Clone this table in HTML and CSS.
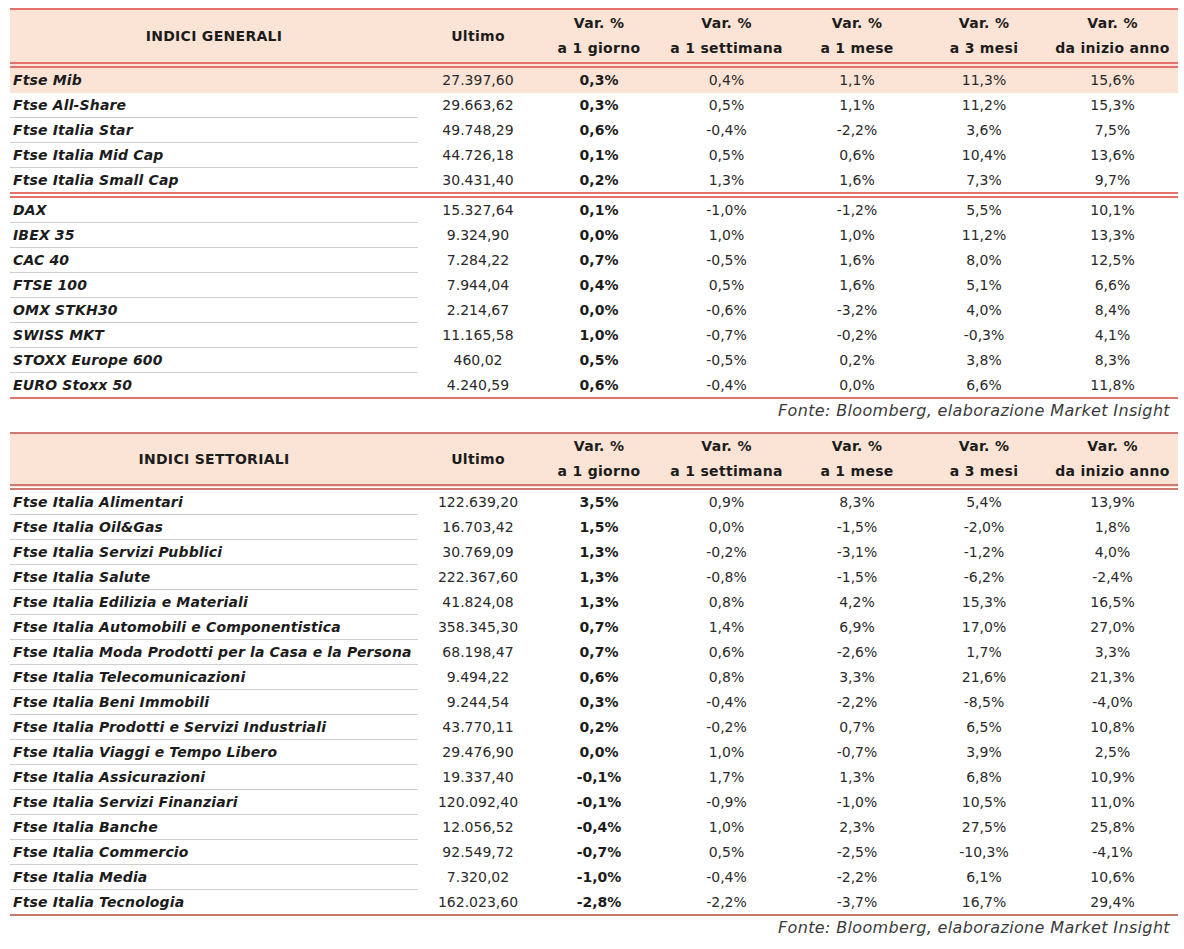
FILE: index.html
```html
<!DOCTYPE html>
<html lang="it">
<head>
<meta charset="utf-8">
<title>Indici</title>
<link rel="stylesheet" href="styles.css">
</head>
<body>
<div class="page">
  <table class="idx idx-gen">
    <colgroup>
      <col class="c-name"><col class="c1"><col class="c2"><col class="c3"><col class="c4"><col class="c5"><col class="c6">
    </colgroup>
    <thead>
      <tr>
        <th>INDICI GENERALI</th>
        <th>Ultimo</th>
        <th>Var. %<br>a 1 giorno</th>
        <th>Var. %<br>a 1 settimana</th>
        <th>Var. %<br>a 1 mese</th>
        <th>Var. %<br>a 3 mesi</th>
        <th>Var. %<br>da inizio anno</th>
      </tr>
    </thead>
    <tbody>
      <tr class="hl"><td class="name">Ftse Mib</td><td>27.397,60</td><td class="b">0,3%</td><td>0,4%</td><td>1,1%</td><td>11,3%</td><td>15,6%</td></tr>
      <tr><td class="name">Ftse All-Share</td><td>29.663,62</td><td class="b">0,3%</td><td>0,5%</td><td>1,1%</td><td>11,2%</td><td>15,3%</td></tr>
      <tr><td class="name">Ftse Italia Star</td><td>49.748,29</td><td class="b">0,6%</td><td>-0,4%</td><td>-2,2%</td><td>3,6%</td><td>7,5%</td></tr>
      <tr><td class="name">Ftse Italia Mid Cap</td><td>44.726,18</td><td class="b">0,1%</td><td>0,5%</td><td>0,6%</td><td>10,4%</td><td>13,6%</td></tr>
      <tr><td class="name">Ftse Italia Small Cap</td><td>30.431,40</td><td class="b">0,2%</td><td>1,3%</td><td>1,6%</td><td>7,3%</td><td>9,7%</td></tr>
    </tbody>
    <tbody class="grp">
      <tr><td class="name">DAX</td><td>15.327,64</td><td class="b">0,1%</td><td>-1,0%</td><td>-1,2%</td><td>5,5%</td><td>10,1%</td></tr>
      <tr><td class="name">IBEX 35</td><td>9.324,90</td><td class="b">0,0%</td><td>1,0%</td><td>1,0%</td><td>11,2%</td><td>13,3%</td></tr>
      <tr><td class="name">CAC 40</td><td>7.284,22</td><td class="b">0,7%</td><td>-0,5%</td><td>1,6%</td><td>8,0%</td><td>12,5%</td></tr>
      <tr><td class="name">FTSE 100</td><td>7.944,04</td><td class="b">0,4%</td><td>0,5%</td><td>1,6%</td><td>5,1%</td><td>6,6%</td></tr>
      <tr><td class="name">OMX STKH30</td><td>2.214,67</td><td class="b">0,0%</td><td>-0,6%</td><td>-3,2%</td><td>4,0%</td><td>8,4%</td></tr>
      <tr><td class="name">SWISS MKT</td><td>11.165,58</td><td class="b">1,0%</td><td>-0,7%</td><td>-0,2%</td><td>-0,3%</td><td>4,1%</td></tr>
      <tr><td class="name">STOXX Europe 600</td><td>460,02</td><td class="b">0,5%</td><td>-0,5%</td><td>0,2%</td><td>3,8%</td><td>8,3%</td></tr>
      <tr class="last"><td class="name">EURO Stoxx 50</td><td>4.240,59</td><td class="b">0,6%</td><td>-0,4%</td><td>0,0%</td><td>6,6%</td><td>11,8%</td></tr>
    </tbody>
  </table>
  <p class="fonte">Fonte: Bloomberg, elaborazione Market Insight</p>

  <table class="idx idx-set">
    <colgroup>
      <col class="c-name"><col class="c1"><col class="c2"><col class="c3"><col class="c4"><col class="c5"><col class="c6">
    </colgroup>
    <thead>
      <tr>
        <th>INDICI SETTORIALI</th>
        <th>Ultimo</th>
        <th>Var. %<br>a 1 giorno</th>
        <th>Var. %<br>a 1 settimana</th>
        <th>Var. %<br>a 1 mese</th>
        <th>Var. %<br>a 3 mesi</th>
        <th>Var. %<br>da inizio anno</th>
      </tr>
    </thead>
    <tbody>
      <tr><td class="name">Ftse Italia Alimentari</td><td>122.639,20</td><td class="b">3,5%</td><td>0,9%</td><td>8,3%</td><td>5,4%</td><td>13,9%</td></tr>
      <tr><td class="name">Ftse Italia Oil&amp;Gas</td><td>16.703,42</td><td class="b">1,5%</td><td>0,0%</td><td>-1,5%</td><td>-2,0%</td><td>1,8%</td></tr>
      <tr><td class="name">Ftse Italia Servizi Pubblici</td><td>30.769,09</td><td class="b">1,3%</td><td>-0,2%</td><td>-3,1%</td><td>-1,2%</td><td>4,0%</td></tr>
      <tr><td class="name">Ftse Italia Salute</td><td>222.367,60</td><td class="b">1,3%</td><td>-0,8%</td><td>-1,5%</td><td>-6,2%</td><td>-2,4%</td></tr>
      <tr><td class="name">Ftse Italia Edilizia e Materiali</td><td>41.824,08</td><td class="b">1,3%</td><td>0,8%</td><td>4,2%</td><td>15,3%</td><td>16,5%</td></tr>
      <tr><td class="name">Ftse Italia Automobili e Componentistica</td><td>358.345,30</td><td class="b">0,7%</td><td>1,4%</td><td>6,9%</td><td>17,0%</td><td>27,0%</td></tr>
      <tr><td class="name">Ftse Italia Moda Prodotti per la Casa e la Persona</td><td>68.198,47</td><td class="b">0,7%</td><td>0,6%</td><td>-2,6%</td><td>1,7%</td><td>3,3%</td></tr>
      <tr><td class="name">Ftse Italia Telecomunicazioni</td><td>9.494,22</td><td class="b">0,6%</td><td>0,8%</td><td>3,3%</td><td>21,6%</td><td>21,3%</td></tr>
      <tr><td class="name">Ftse Italia Beni Immobili</td><td>9.244,54</td><td class="b">0,3%</td><td>-0,4%</td><td>-2,2%</td><td>-8,5%</td><td>-4,0%</td></tr>
      <tr><td class="name">Ftse Italia Prodotti e Servizi Industriali</td><td>43.770,11</td><td class="b">0,2%</td><td>-0,2%</td><td>0,7%</td><td>6,5%</td><td>10,8%</td></tr>
      <tr><td class="name">Ftse Italia Viaggi e Tempo Libero</td><td>29.476,90</td><td class="b">0,0%</td><td>1,0%</td><td>-0,7%</td><td>3,9%</td><td>2,5%</td></tr>
      <tr><td class="name">Ftse Italia Assicurazioni</td><td>19.337,40</td><td class="b">-0,1%</td><td>1,7%</td><td>1,3%</td><td>6,8%</td><td>10,9%</td></tr>
      <tr><td class="name">Ftse Italia Servizi Finanziari</td><td>120.092,40</td><td class="b">-0,1%</td><td>-0,9%</td><td>-1,0%</td><td>10,5%</td><td>11,0%</td></tr>
      <tr><td class="name">Ftse Italia Banche</td><td>12.056,52</td><td class="b">-0,4%</td><td>1,0%</td><td>2,3%</td><td>27,5%</td><td>25,8%</td></tr>
      <tr><td class="name">Ftse Italia Commercio</td><td>92.549,72</td><td class="b">-0,7%</td><td>0,5%</td><td>-2,5%</td><td>-10,3%</td><td>-4,1%</td></tr>
      <tr><td class="name">Ftse Italia Media</td><td>7.320,02</td><td class="b">-1,0%</td><td>-0,4%</td><td>-2,2%</td><td>6,1%</td><td>10,6%</td></tr>
      <tr class="last"><td class="name">Ftse Italia Tecnologia</td><td>162.023,60</td><td class="b">-2,8%</td><td>-2,2%</td><td>-3,7%</td><td>16,7%</td><td>29,4%</td></tr>
    </tbody>
  </table>
  <p class="fonte">Fonte: Bloomberg, elaborazione Market Insight</p>
</div>
</body>
</html>
```

FILE: styles.css
```css
html, body {
  margin: 0;
  padding: 0;
  background: #ffffff;
}

body {
  font-family: "DejaVu Sans", "Liberation Sans", sans-serif;
  color: #262626;
}

.page {
  padding: 8px 6px 0 10px;
  width: 1168px;
}

.idx {
  width: 1168px;
  table-layout: fixed;
  border-collapse: collapse;
  border-spacing: 0;
}

.c-name { width: 408px; }
.c1 { width: 120px; }
.c2 { width: 122px; }
.c3 { width: 133px; }
.c4 { width: 128px; }
.c5 { width: 126px; }
.c6 { width: 131px; }

.idx th {
  background: #fbe4d5;
  font-weight: bold;
  font-size: 14px;
  letter-spacing: 0.3px;
  line-height: 25px;
  height: 52px;
  padding: 0;
  text-align: center;
  color: #1c1c1c;
  border-top: 2px solid #e2726a;
  border-bottom: 6px double #e2726a;
}

.idx-set th {
  height: 50px;
}

.idx td {
  height: 24px;
  padding: 0;
  font-size: 14px;
  line-height: 24px;
  text-align: center;
  color: #2a2a2a;
  white-space: nowrap;
}

.idx td.name {
  text-align: left;
  padding-left: 3px;
  font-weight: bold;
  font-style: italic;
  font-size: 14px;
  letter-spacing: 0.15px;
  color: #1c1c1c;
  border-bottom: 1px solid #cfcfcf;
}

.idx td.b {
  font-weight: bold;
  color: #1c1c1c;
}

.idx tr.hl td {
  background: #fbe4d5;
  border-bottom-color: #fbe4d5;
}

.idx tbody.grp tr:first-child td {
  border-top: 6px double #e2726a;
}

.idx tr.last td {
  border-bottom: 2px solid #e2726a;
}

.idx-set th {
  border-top-color: #cf7a70;
  border-bottom-color: #cf7a70;
}

.idx-set tr.last td {
  border-bottom-color: #c9786d;
}

.fonte {
  margin: 0;
  text-align: right;
  padding-right: 8px;
  font-style: italic;
  font-size: 16px;
  letter-spacing: 0.35px;
  line-height: 24px;
  color: #3a3a3a;
}

.fonte + .idx {
  margin-top: 9px;
}
```
